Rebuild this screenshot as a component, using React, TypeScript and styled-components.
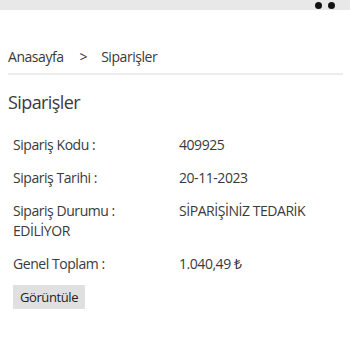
import styled, { createGlobalStyle } from "styled-components";

const GlobalStyle = createGlobalStyle`
  body {
    margin: 0;
    background: #fff;
    font-family: "Open Sans", "Noto Sans", sans-serif;
    color: #3a3a3a;
    letter-spacing: -0.45px;
  }
`;

const orderRows = [
  { label: "Sipariş Kodu :", value: "409925" },
  { label: "Sipariş Tarihi :", value: "20-11-2023" },
  { label: "Sipariş Durumu :", value: "SİPARİŞİNİZ TEDARİK EDİLİYOR" },
  { label: "Genel Toplam :", value: "1.040,49 ₺" },
];

const App = () => {
  return (
    <>
      <GlobalStyle />
      <TopBar>
        <Dot />
        <Dot />
      </TopBar>
      <Page>
        <Breadcrumb>
          <span>Anasayfa</span>
          <Separator>&gt;</Separator>
          <span>Siparişler</span>
        </Breadcrumb>
        <Title>Siparişler</Title>
        <Details>
          {orderRows.map((row) => (
            <Row key={row.label}>
              <Label>{row.label}</Label>
              {row.value}
            </Row>
          ))}
          <ViewButton>Görüntüle</ViewButton>
        </Details>
      </Page>
    </>
  );
};

const TopBar = styled.div`
  height: 10px;
  background: #e8e8e8;
  display: flex;
  justify-content: flex-end;
  align-items: flex-start;
  gap: 6px;
  padding: 2px 15px 0 0;
  box-sizing: border-box;
`;

const Dot = styled.span`
  width: 7px;
  height: 7px;
  border-radius: 50%;
  background: #111;
`;

const Page = styled.main`
  padding: 0 7px 0 8px;
`;

const Breadcrumb = styled.nav`
  display: flex;
  font-size: 14px;
  line-height: 20px;
  margin-top: 37px;
  padding-bottom: 6px;
  border-bottom: 2px solid #ececec;
`;

const Separator = styled.span`
  margin: 0 14px 0 16px;
`;

const Title = styled.h1`
  font-size: 18px;
  font-weight: 400;
  line-height: 24px;
  letter-spacing: -0.6px;
  margin: 15px 0 15px;
`;

const Details = styled.section`
  padding-left: 5px;
  font-size: 14px;
  line-height: 20px;
`;

const Row = styled.div`
  padding: 6px 0 7px;
`;

const Label = styled.span`
  display: inline-block;
  width: 166px;
`;

const ViewButton = styled.button`
  margin-top: 4px;
  width: 72px;
  height: 24px;
  border: none;
  background: #e0e0e0;
  font-family: inherit;
  font-size: 13px;
  letter-spacing: -0.4px;
  color: #222;
  padding: 0;
`;

export default App;
